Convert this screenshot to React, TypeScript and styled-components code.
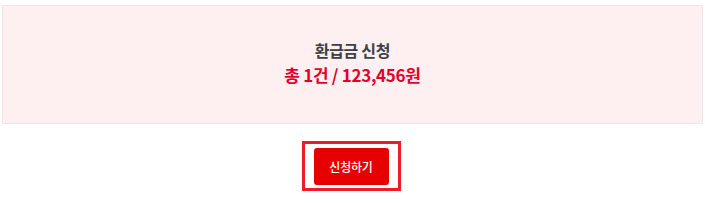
import { createGlobalStyle, styled } from 'styled-components';

const GlobalStyle = createGlobalStyle`
  html, body {
    margin: 0;
    padding: 0;
    background: #fff;
    font-family: "Noto Sans CJK KR", "Noto Sans", sans-serif;
  }
`;

const App = () => {
  return (
    <>
      <GlobalStyle />
      <Layout>
        <SummaryBox>
          <Title>환급금 신청</Title>
          <Total>총 1건 / 123,456원</Total>
        </SummaryBox>
        <ButtonRow>
          <FocusFrame>
            <SubmitButton type="button">신청하기</SubmitButton>
          </FocusFrame>
        </ButtonRow>
      </Layout>
    </>
  );
};

export default App;

const Layout = styled.div`
  width: 705px;
  padding: 5px 2px 0 2px;
  box-sizing: border-box;
`;

const SummaryBox = styled.div`
  display: flex;
  flex-direction: column;
  align-items: center;
  justify-content: center;
  height: 119px;
  box-sizing: border-box;
  border: 1px solid #efe6e6;
  background-color: #fef0f0;
  padding-bottom: 4px;
`;

const Title = styled.div`
  color: #3f3f46;
  font-size: 16px;
  font-weight: 700;
  line-height: 24px;
  letter-spacing: -0.3px;
`;

const Total = styled.div`
  color: #e4002b;
  font-size: 17px;
  font-weight: 700;
  line-height: 26px;
  letter-spacing: -0.3px;
`;

const ButtonRow = styled.div`
  display: flex;
  justify-content: center;
  margin-top: 17px;
  padding-right: 3px;
`;

const FocusFrame = styled.div`
  display: flex;
  border: 3px solid #ee1c25;
  padding: 4px 9px 3px 9px;
`;

const SubmitButton = styled.button`
  width: 75px;
  height: 37px;
  border: none;
  border-radius: 3px;
  background-color: #e60000;
  color: #fff;
  font-family: "Noto Sans CJK KR", sans-serif;
  font-size: 12px;
  font-weight: 500;
  letter-spacing: -0.2px;
  cursor: pointer;
`;
